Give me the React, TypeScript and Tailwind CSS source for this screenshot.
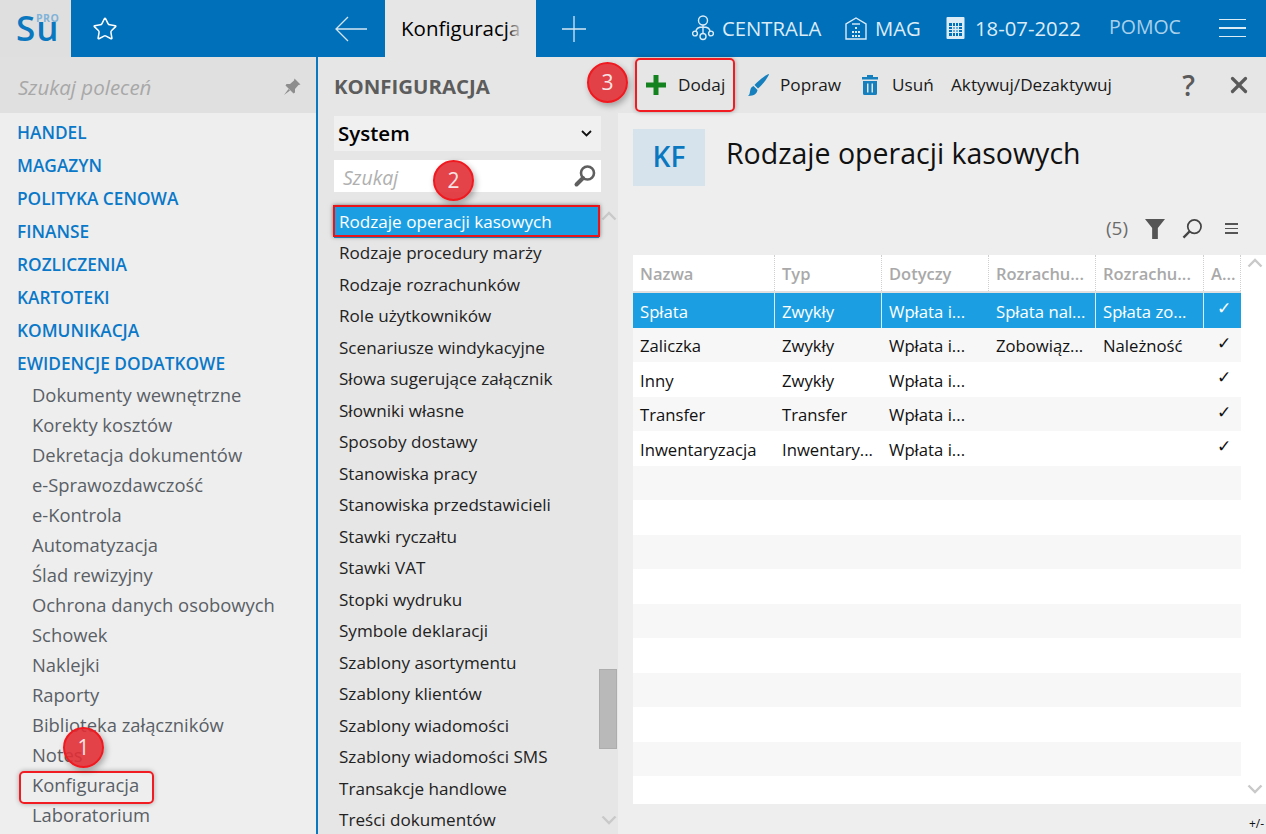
import { Star, X } from "lucide-react";

const mainMenu = ["HANDEL", "MAGAZYN", "POLITYKA CENOWA", "FINANSE", "ROZLICZENIA", "KARTOTEKI", "KOMUNIKACJA", "EWIDENCJE DODATKOWE"];

const subMenu = [
  "Dokumenty wewnętrzne",
  "Korekty kosztów",
  "Dekretacja dokumentów",
  "e-Sprawozdawczość",
  "e-Kontrola",
  "Automatyzacja",
  "Ślad rewizyjny",
  "Ochrona danych osobowych",
  "Schowek",
  "Naklejki",
  "Raporty",
  "Biblioteka załączników",
  "Notes",
  "Konfiguracja",
  "Laboratorium",
];

const configItems = [
  "Rodzaje operacji kasowych",
  "Rodzaje procedury marży",
  "Rodzaje rozrachunków",
  "Role użytkowników",
  "Scenariusze windykacyjne",
  "Słowa sugerujące załącznik",
  "Słowniki własne",
  "Sposoby dostawy",
  "Stanowiska pracy",
  "Stanowiska przedstawicieli",
  "Stawki ryczałtu",
  "Stawki VAT",
  "Stopki wydruku",
  "Symbole deklaracji",
  "Szablony asortymentu",
  "Szablony klientów",
  "Szablony wiadomości",
  "Szablony wiadomości SMS",
  "Transakcje handlowe",
  "Treści dokumentów",
];

const rows = [
  ["Spłata", "Zwykły", "Wpłata i...", "Spłata nal...", "Spłata zo...", true],
  ["Zaliczka", "Zwykły", "Wpłata i...", "Zobowiąz...", "Należność", true],
  ["Inny", "Zwykły", "Wpłata i...", "", "", true],
  ["Transfer", "Transfer", "Wpłata i...", "", "", true],
  ["Inwentaryzacja", "Inwentary...", "Wpłata i...", "", "", true],
  ...Array.from({ length: 10 }, () => ["", "", "", "", "", false]),
];

const columns = "grid grid-cols-[142px_107px_107px_107px_108px_37px]";

function Chevron({ up = false }: { up?: boolean }) {
  return (
    <svg width="16" height="10" viewBox="0 0 16 10" fill="none" stroke="#c9c9c9" strokeWidth="2.4">
      <path d={up ? "M1.5 8.5 8 2l6.5 6.5" : "M1.5 1.5 8 8l6.5-6.5"} />
    </svg>
  );
}

function Badge({ n, className }: { n: number; className: string }) {
  return (
    <div
      className={`absolute w-[41px] h-[41px] rounded-full bg-[#e02f35]/90 border-2 border-[#f0191f] shadow-[2px_3px_6px_rgba(0,0,0,0.3)] flex items-center justify-center text-[#f8e4e4] text-[21px] ${className}`}
    >
      {n}
    </div>
  );
}

function TopBar() {
  return (
    <div className="h-[57px] flex bg-[#0070ba] text-[#dcecf7] shrink-0">
      <div className="w-[71px] bg-[#dfdfdf] relative shrink-0">
        <span className="absolute left-[16px] top-[13px] text-[35px] leading-[30px] font-semibold text-[#0a78c0] tracking-[1px]">Su</span>
        <span className="absolute left-[36px] top-[14px] text-[10.5px] leading-[8px] tracking-[0.5px] text-[#7fb3d9] font-bold">PRO</span>
      </div>
      <div className="w-[265px] flex items-center shrink-0">
        <Star size={26} strokeWidth={1.4} className="ml-[21px] text-white" />
        <svg className="ml-auto mr-[-31px]" width="32" height="26" viewBox="0 0 32 26" fill="none" stroke="#d5e6f3" strokeWidth="1.3">
          <path d="M32 13H1M13 1 1 13l12 12" />
        </svg>
      </div>
      <div className="ml-[49px] w-[151px] bg-[#e6e6e6] relative flex items-center pl-[16px] text-[20.5px] text-black overflow-hidden shrink-0">
        Konfiguracja
        <div className="absolute right-[14px] top-0 bottom-0 w-[16px] bg-gradient-to-r from-transparent to-[#e6e6e6]" />
      </div>
      <svg className="ml-[26px] self-center" width="24" height="26" viewBox="0 0 24 26" fill="none" stroke="#d5e6f3" strokeWidth="1.3">
        <path d="M12 0v26M0 13h24" />
      </svg>
      <div className="ml-auto flex items-center text-[20.3px] pb-[1px]">
        <svg width="22" height="26" viewBox="0 0 22 26" fill="none" stroke="#dcecf7" strokeWidth="1.4">
          <circle cx="11" cy="5.5" r="4.5" />
          <path d="M11 10v8M4 16.5c0-3 2-4.5 7-4.5s7 1.5 7 4.5" />
          <circle cx="3" cy="18.5" r="2.4" />
          <circle cx="11" cy="21.5" r="3" />
          <circle cx="19" cy="18.5" r="2.4" />
        </svg>
        <span className="ml-[8px] w-[99px] whitespace-nowrap">CENTRALA</span>
        <svg className="ml-[24px]" width="22" height="24" viewBox="0 0 22 24" fill="none" stroke="#dcecf7" strokeWidth="1.4">
          <path d="M1 23V8l10-6 10 6v15z" />
          <path d="M7 8h8" />
          <path d="M10 12h2M7 16h2M10 16h2M13 16h2M7 20h2M10 20h2M13 20h2" strokeWidth="2.2" />
        </svg>
        <span className="ml-[8px] w-[47px]">MAG</span>
        <svg className="ml-[24px]" width="19" height="24" viewBox="0 0 19 24" fill="none">
          <rect x="0.5" y="1" width="18" height="22" rx="1" fill="#dcecf7" />
          <rect x="3" y="7" width="13" height="13" fill="#0070ba" />
          <path d="M3 10.5h13M3 13.5h13M3 16.5h13M6.5 7v13M9.5 7v13M12.5 7v13" stroke="#dcecf7" />
          <rect x="6.5" y="10.5" width="6" height="6" fill="#dcecf7" opacity="0.5" />
        </svg>
        <span className="ml-[10px] w-[104px] whitespace-nowrap">18-07-2022</span>
        <span className="ml-[30px] text-[#a9d0ea] text-[19.5px] pb-[3px] w-[75px]">POMOC</span>
        <div className="ml-[35px] mr-[20px] w-[27px] flex flex-col gap-[7px]">
          <div className="h-[1.5px] bg-[#dcecf7]" />
          <div className="h-[1.5px] bg-[#dcecf7]" />
          <div className="h-[1.5px] bg-[#dcecf7]" />
        </div>
      </div>
    </div>
  );
}

function LeftMenu() {
  return (
    <div className="w-[318px] shrink-0 border-r-2 border-[#0a78c0] bg-[#eeeeee] flex flex-col">
      <div className="h-[56px] bg-[#e0e0e0] flex items-center pl-[18px] pr-[15px] pt-[4px] shrink-0">
        <span className="italic text-[#a8a8a8] text-[20.5px]">Szukaj poleceń</span>
        <svg className="ml-auto" width="18" height="18" viewBox="0 0 18 18" fill="#8d8d8d">
          <path d="M11.5 0.5 17.5 6.5 15.5 7 12 11 12 14.5 10.5 15.5 2.5 7.5 3.5 6 7 6 11 2.5z" />
          <path d="M5.5 11 1 17l6-4.5z" />
        </svg>
      </div>
      <div className="pt-[3px]">
        {mainMenu.map((item) => (
          <div key={item} className="h-[33px] flex items-center pl-[17px] text-[#0a78c8] text-[17.3px] font-semibold whitespace-nowrap">
            {item}
          </div>
        ))}
        {subMenu.map((item) => (
          <div key={item} className="h-[30px] flex items-center pl-[32px] text-[#5a5f66] text-[18.4px] whitespace-nowrap">
            {item}
          </div>
        ))}
      </div>
    </div>
  );
}

function ConfigList() {
  return (
    <div className="w-[300px] shrink-0 bg-[#e6e6e6] flex flex-col relative overflow-hidden">
      <div className="h-[59px] flex items-center pl-[16px] text-[20.4px] font-bold text-[#5c5c5c] shrink-0">KONFIGURACJA</div>
      <div className="mx-[16px] w-[267px] h-[35px] bg-[#f0f0f0] flex items-center pl-[4px] pr-[9px] text-[20.5px] font-semibold text-black shrink-0">
        System
        <svg className="ml-auto" width="11" height="7" viewBox="0 0 11 7" fill="none" stroke="#111" strokeWidth="1.8">
          <path d="M1 1l4.5 4.5L10 1" />
        </svg>
      </div>
      <div className="mt-[9px] mx-[16px] w-[267px] h-[32px] bg-white flex items-center pl-[9px] pr-[4px] shrink-0">
        <span className="italic text-[#b0b0b0] text-[19.5px] pt-[3px]">Szukaj</span>
        <svg className="ml-auto" width="24" height="24" viewBox="0 0 24 24" fill="none" stroke="#5f5f5f">
          <circle cx="14.5" cy="9" r="6.5" strokeWidth="2.6" />
          <path d="M10 14 3.5 20.5" strokeWidth="4" strokeLinecap="round" />
        </svg>
      </div>
      <div className="mt-[14px] w-[283px] shrink-0">
        {configItems.map((item, i) => (
          <div
            key={item}
            className={`h-[31.5px] flex items-center ml-[16px] pl-[5px] text-[17.1px] whitespace-nowrap ${i === 0 ? "bg-[#1c9fe2] text-white" : "text-[#222]"}`}
          >
            {item}
          </div>
        ))}
      </div>
      <div className="absolute right-[0px] top-[149px] bottom-0 w-[19px] bg-[#e6e6e6]">
        <div className="absolute left-[2px] top-[5px]">
          <Chevron up />
        </div>
        <div className="absolute left-0 top-[463px] w-[18px] h-[80px] bg-[#b9b9b9] border border-[#adadad]" />
        <div className="absolute left-[2px] top-[609px]">
          <Chevron />
        </div>
      </div>
    </div>
  );
}

function Toolbar() {
  return (
    <div className="h-[56px] bg-[#e6e6e6] flex items-center text-[17.2px] text-[#1a1a1a] shrink-0 pb-[1px]">
      <svg className="ml-[28px]" width="20" height="20" viewBox="0 0 20 20" fill="#14821e">
        <path d="M7.5 0h5v7.5H20v5h-7.5V20h-5v-7.5H0v-5h7.5z" />
      </svg>
      <span className="ml-[12px] w-[47px]">Dodaj</span>
      <svg className="ml-[23px]" width="21" height="22" viewBox="0 0 21 22" fill="#1580bd">
        <path d="M20.5 0c.6 0 .4.8 0 1.6C18 6.5 13.5 11.5 10 14.5L6.5 11C9.5 7.5 15.5 2.5 20.5 0z" />
        <path d="M5.5 12l4 4c-.3 3-3 6-9.5 6 2.2-1.6 1.5-3.5 2.2-5.6.5-2.2 1.5-3.8 3.3-4.4z" />
      </svg>
      <span className="ml-[11px] w-[59px]">Popraw</span>
      <svg className="ml-[23px]" width="16" height="20" viewBox="0 0 16 20" fill="#1580bd">
        <path d="M0 2h5V0h6v2h5v2.5H0z" />
        <path d="M1 6h14v12.5a1.5 1.5 0 0 1-1.5 1.5h-11A1.5 1.5 0 0 1 1 18.500zM5 8.500v9h1.500v-9zM9.500 8.500v9H11v-9z" fillRule="evenodd" />
      </svg>
      <span className="ml-[14px] w-[41px]">Usuń</span>
      <span className="ml-[18px] whitespace-nowrap">Aktywuj/Dezaktywuj</span>
      <span className="ml-auto text-[28px] font-semibold text-[#5a5a5a]">?</span>
      <X size={26} strokeWidth={3} className="ml-[31px] mr-[14px] text-[#5a5a5a]" />
    </div>
  );
}

function DataTable() {
  return (
    <div className="ml-[15px] h-[549px] bg-white flex overflow-hidden">
      <div className="w-[608px] shrink-0 text-[16.7px]">
        <div className={`${columns} h-[38px] border-b-2 border-[#e0e0e0] text-[#a9a9a9] font-semibold text-[16.5px]`}>
          {["Nazwa", "Typ", "Dotyczy", "Rozrachu...", "Rozrachu...", "A..."].map((title, i) => (
            <div key={i} className="pl-[7px] pt-[7px] border-r border-dotted border-[#cfcfcf] overflow-hidden whitespace-nowrap">
              {title}
            </div>
          ))}
        </div>
        {rows.map((row, i) => (
          <div
            key={i}
            className={`${columns} h-[34.5px] ${i === 0 ? "bg-[#1c9fe2] text-white" : i % 2 === 1 ? "bg-[#f7f7f7] text-[#111]" : "bg-white text-[#111]"}`}
          >
            {row.slice(0, 5).map((cell, j) => (
              <div
                key={j}
                className={`pl-[7px] pt-[2px] flex items-center whitespace-nowrap ${i === 0 && (j === 0 || j === 1 || j === 3 || j === 4) ? "border-r border-[#d7eefa]" : ""}`}
              >
                {cell as string}
              </div>
            ))}
            <div className="flex items-center justify-center pb-[3px] pl-[3px] text-[17px] font-['DejaVu_Sans',sans-serif]">
              {row[5] && "✓"}
            </div>
          </div>
        ))}
      </div>
      <div className="flex-1 flex flex-col items-center justify-between pt-[3px] pb-[10px] pl-[3px]">
        <Chevron up />
        <Chevron />
      </div>
    </div>
  );
}

function DetailsPanel() {
  return (
    <div className="flex-1 min-w-0 flex flex-col bg-[#eeeeee]">
      <Toolbar />
      <div className="h-[73px] pt-[16px] pl-[15px] flex shrink-0">
        <div className="w-[72px] h-[57px] bg-[#d6e3ec] flex items-center justify-center text-[#0a78c0] text-[28px] font-semibold pb-[3px]">KF</div>
        <div className="ml-[21px] text-[28.5px] leading-[48px] text-[#111] whitespace-nowrap">Rodzaje operacji kasowych</div>
      </div>
      <div className="h-[69px] flex items-center justify-end pt-[16px] pr-[28px] text-[#6b6b6b] shrink-0">
        <span className="text-[19px] mr-[17px]">(5)</span>
        <svg className="mr-[17px]" width="20" height="20" viewBox="0 0 21 21" fill="#555">
          <path d="M0 0h21l-7.5 9.5V21h-6V9.5z" />
        </svg>
        <svg className="mr-[22px]" width="21" height="20" viewBox="0 0 21 21" fill="none" stroke="#444" strokeWidth="1.8">
          <circle cx="12.5" cy="8" r="7" />
          <path d="M7.5 13 1 19.5" strokeWidth="2.4" />
        </svg>
        <div className="w-[13px] flex flex-col gap-[3px]">
          <div className="h-[1.5px] bg-[#555]" />
          <div className="h-[1.5px] bg-[#555]" />
          <div className="h-[1.5px] bg-[#555]" />
        </div>
      </div>
      <DataTable />
      <div className="flex-1 flex justify-end items-end pr-[2px] pb-[1px] text-[12px] text-[#111]">+/-</div>
    </div>
  );
}

export default function App() {
  return (
    <div className="w-[1266px] h-[834px] relative overflow-hidden flex flex-col font-['Open_Sans',sans-serif]">
      <TopBar />
      <div className="flex flex-1 min-h-0">
        <LeftMenu />
        <ConfigList />
        <DetailsPanel />
      </div>

      {/* red annotations drawn over the screenshot */}
      <div className="absolute left-[19px] top-[771px] w-[135px] h-[33px] rounded-[5px] border-2 border-[#f01c22] shadow-[0_0_5px_rgba(0,0,0,0.3)]" />
      <div className="absolute left-[333px] top-[205px] w-[267px] h-[32px] border-2 border-[#e8141a] shadow-[0_0_4px_rgba(0,0,0,0.5)]" />
      <div className="absolute left-[635px] top-[58px] w-[100px] h-[54px] rounded-[5px] border-2 border-[#f01c22] shadow-[0_0_5px_rgba(0,0,0,0.3)]" />
      <Badge n={1} className="left-[63px] top-[727px]" />
      <Badge n={2} className="left-[433px] top-[160px]" />
      <Badge n={3} className="left-[587px] top-[62px]" />
    </div>
  );
}
